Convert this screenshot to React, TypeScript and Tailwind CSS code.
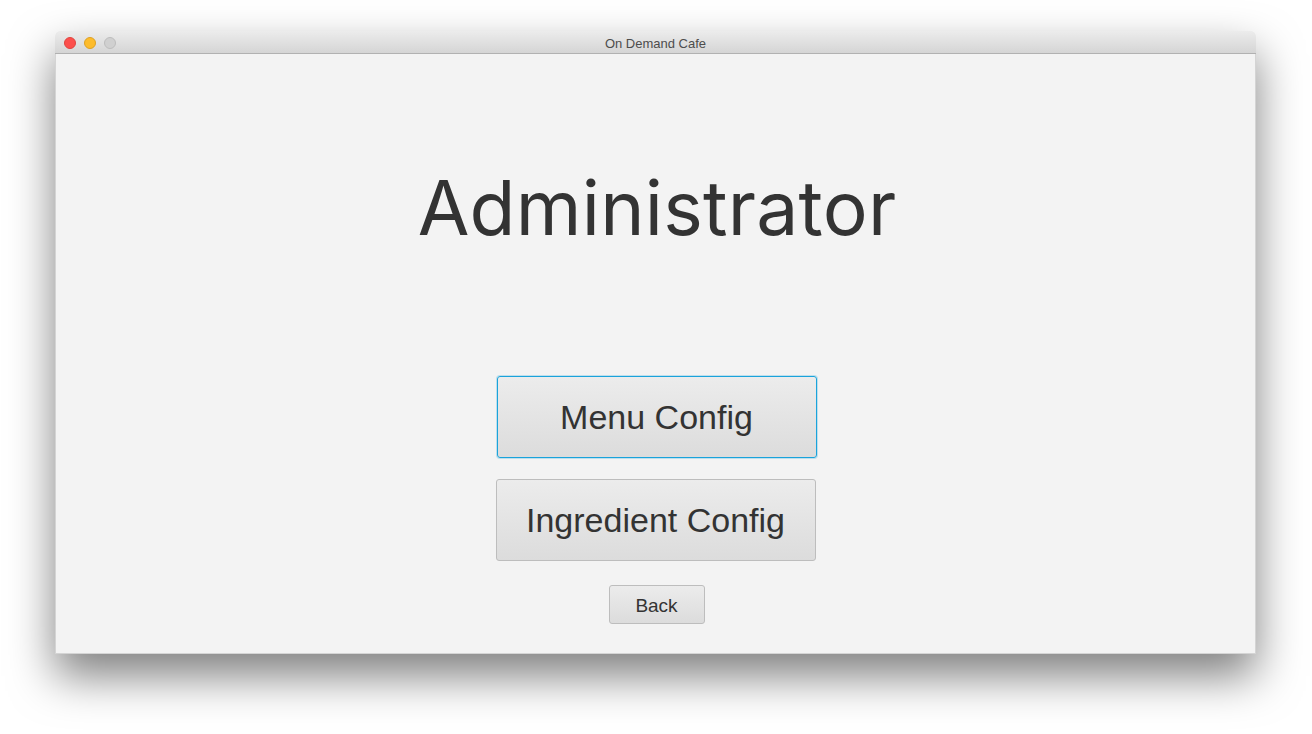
import React from 'react';

const TrafficLights: React.FC = () => (
  <div className="flex items-center gap-[8px] pl-[9px] pt-[2px]">
    <span className="w-[12px] h-[12px] rounded-full bg-[#fc4f4c] border border-[#e0443e]" />
    <span className="w-[12px] h-[12px] rounded-full bg-[#fdbc2c] border border-[#dea123]" />
    <span className="w-[12px] h-[12px] rounded-full bg-[#d0d0d0] border border-[#bdbdbd]" />
  </div>
);

const App: React.FC = () => {
  return (
    <div className="w-[1312px] h-[734px] bg-white pt-[31px] pl-[55px] overflow-hidden">
      <div className="w-[1201px] h-[623px] flex flex-col rounded-t-[5px] shadow-[0_22px_45px_rgba(0,0,0,0.5)]">
        <header className="relative h-[23px] flex items-center rounded-t-[5px] border-b border-[#b1b1b1] bg-gradient-to-b from-[#ececec] to-[#d5d5d5]">
          <TrafficLights />
          <span
            className="absolute left-0 right-0 top-[5px] text-center text-[13px] leading-[16px] text-[#4d4d4d]"
            style={{ fontFamily: '"Liberation Sans", Arial, sans-serif' }}
          >
            On Demand Cafe
          </span>
        </header>

        <main className="flex-1 bg-[#f3f3f3] flex flex-col items-center border-x border-b border-[#d4d4d4]" style={{ fontFamily: '"Liberation Sans", Arial, sans-serif' }}>
          <h1
            className="mt-[116px] ml-[3px] text-[75px] leading-none text-[#333333] font-normal tracking-[0.25px]"
            style={{ fontFamily: 'Inter, "Noto Sans", sans-serif' }}
          >
            Administrator
          </h1>

          <div className="mt-[131px] flex flex-col items-center">
            <button className="w-[320px] h-[82px] rounded-[3px] border border-[#1aa3db] shadow-[0_0_0_1px_rgba(26,163,219,0.25)] bg-gradient-to-b from-[#ececec] to-[#dcdcdc] text-[34px] text-[#333333] ml-[2px]">
              Menu Config
            </button>
            <button className="mt-[21px] w-[320px] h-[82px] rounded-[3px] border border-[#bdbdbd] bg-gradient-to-b from-[#ececec] to-[#dcdcdc] text-[34px] text-[#333333]">
              Ingredient Config
            </button>
            <button className="mt-[24px] ml-[2px] pt-[3px] w-[96px] h-[39px] rounded-[3px] border border-[#bdbdbd] bg-gradient-to-b from-[#ececec] to-[#dcdcdc] text-[19px] text-[#333333]">
              Back
            </button>
          </div>
        </main>
      </div>
    </div>
  );
};

export default App;
